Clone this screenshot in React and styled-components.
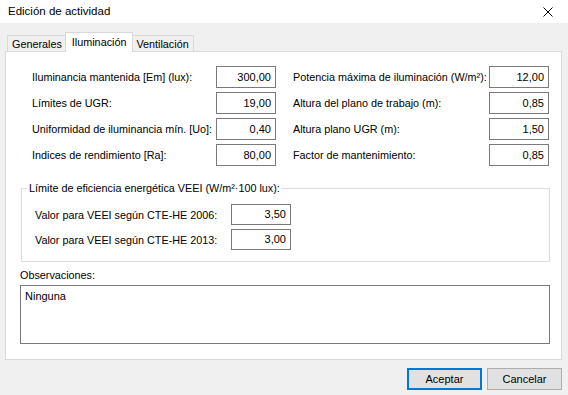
import React from 'react';
import styled, { createGlobalStyle } from 'styled-components';

const Global = createGlobalStyle`
  html, body { margin: 0; padding: 0; background: #f0f0f0; }
  body { font-family: "Liberation Sans", Arial, sans-serif; font-size: 10.8px; color: #000; }
  #root { width: 568px; height: 395px; overflow: hidden; }
  * { box-sizing: border-box; }
`;

const Window = styled.div`
  width: 568px;
  height: 395px;
  display: flex;
  flex-direction: column;
  background: #f0f0f0;
`;

const TitleBar = styled.div`
  height: 23px;
  background: #fff;
  display: flex;
  align-items: center;
  justify-content: space-between;
  padding: 0 15px 0 8px;
`;

const Title = styled.span`
  font-size: 11.5px;
  line-height: 14px;
  margin-top: -2px;
`;

const Body = styled.div`
  padding: 9px 6px 0 5px;
  display: flex;
  flex-direction: column;
`;

const TabStrip = styled.div`
  display: flex;
  align-items: flex-end;
  height: 19px;
  padding-left: 2px;
`;

const Tab = styled.div`
  position: relative;
  height: ${p => (p.$active ? '20px' : '16px')};
  margin: ${p => (p.$active ? '0 -2px -1px' : '0')};
  z-index: ${p => (p.$active ? 1 : 0)};
  padding: ${p => (p.$active ? '0 6px 1px' : '0 4px')};
  background: ${p => (p.$active ? '#fff' : '#f0f0f0')};
  border: 1px solid #d9d9d9;
  border-bottom: none;
  display: flex;
  align-items: center;
  line-height: 14px;
  white-space: nowrap;
`;

const Panel = styled.div`
  width: 557px;
  background: #fff;
  border: 1px solid #d9d9d9;
  padding: 14px 13px 15px 14px;
  display: flex;
  flex-direction: column;
`;

const FieldGrid = styled.div`
  display: grid;
  grid-template-columns: 244px 256px;
  column-gap: 17px;
  row-gap: 4px;
  margin-left: 12px;
`;

const Field = styled.div`
  display: flex;
  align-items: center;
  justify-content: space-between;
  height: 22px;
`;

const Label = styled.span`
  line-height: 14px;
  white-space: nowrap;
`;

const NumBox = styled.input`
  width: 60px;
  height: ${p => p.$h || 22}px;
  border: 1px solid #7a7a7a;
  background: #fff;
  text-align: right;
  padding: 0 4px 1px 2px;
  font-family: inherit;
  font-size: 11px;
  color: #000;
  outline: none;
`;

const Group = styled.fieldset`
  margin: 15px 0 0 1px;
  width: 529px;
  border: 1px solid #dcdcdc;
  padding: 8px 10px 11px 5px;
  min-width: 0;
`;

const Legend = styled.legend`
  padding: 0 2px;
  line-height: 15px;
`;

const GroupGrid = styled.div`
  display: grid;
  grid-template-columns: 196px 60px;
  row-gap: 4px;
  margin-left: 8px;
`;

const GroupField = styled.div`
  display: contents;
`;

const GroupLabel = styled.span`
  display: flex;
  align-items: center;
  height: 21px;
  line-height: 14px;
  white-space: nowrap;
`;

const ObsLabel = styled.div`
  margin-top: 6px;
  line-height: 15px;
`;

const TextArea = styled.textarea`
  margin-top: 2px;
  width: 530px;
  height: 59px;
  border: 1px solid #7a7a7a;
  padding: 3px 4px;
  font-family: inherit;
  font-size: 11px;
  line-height: 14px;
  resize: none;
  outline: none;
  color: #000;
  display: block;
`;

const ButtonRow = styled.div`
  display: flex;
  justify-content: flex-end;
  gap: 5px;
  margin-top: 8px;
`;

const Button = styled.button`
  width: 75px;
  height: 22px;
  background: #e1e1e1;
  border: ${p => (p.$primary ? '2px solid #0078d7' : '1px solid #adadad')};
  font-family: inherit;
  font-size: 11px;
  color: #000;
  padding: 0;
  line-height: 14px;
`;

const CloseIcon = () => (
  <svg width="10" height="10" viewBox="0 0 10 10">
    <path d="M0.5 0.5 L9.5 9.5 M9.5 0.5 L0.5 9.5" stroke="#000" strokeWidth="1" fill="none" />
  </svg>
);

const leftFields = [
  ['Iluminancia mantenida [Em] (lux):', '300,00'],
  ['Límites de UGR:', '19,00'],
  ['Uniformidad de iluminancia mín. [Uo]:', '0,40'],
  ['Indices de rendimiento [Ra]:', '80,00'],
];

const rightFields = [
  ['Potencia máxima de iluminación (W/m²):', '12,00'],
  ['Altura del plano de trabajo (m):', '0,85'],
  ['Altura plano UGR (m):', '1,50'],
  ['Factor de mantenimiento:', '0,85'],
];

export default function App() {
  const rows = [];
  for (let i = 0; i < 4; i++) {
    rows.push(
      <Field key={'l' + i}>
        <Label>{leftFields[i][0]}</Label>
        <NumBox readOnly value={leftFields[i][1]} />
      </Field>,
      <Field key={'r' + i}>
        <Label>{rightFields[i][0]}</Label>
        <NumBox readOnly value={rightFields[i][1]} />
      </Field>
    );
  }
  return (
    <>
      <Global />
      <Window>
        <TitleBar>
          <Title>Edición de actividad</Title>
          <CloseIcon />
        </TitleBar>
        <Body>
          <TabStrip>
            <Tab>Generales</Tab>
            <Tab $active>Iluminación</Tab>
            <Tab>Ventilación</Tab>
          </TabStrip>
          <Panel>
            <FieldGrid>{rows}</FieldGrid>
            <Group>
              <Legend>Límite de eficiencia energética VEEI (W/m²·100 lux):</Legend>
              <GroupGrid>
                <GroupField>
                  <GroupLabel>Valor para VEEI según CTE-HE 2006:</GroupLabel>
                  <NumBox readOnly value="3,50" $h={21} />
                </GroupField>
                <GroupField>
                  <GroupLabel>Valor para VEEI según CTE-HE 2013:</GroupLabel>
                  <NumBox readOnly value="3,00" $h={21} />
                </GroupField>
              </GroupGrid>
            </Group>
            <ObsLabel>Observaciones:</ObsLabel>
            <TextArea readOnly value="Ninguna" />
          </Panel>
          <ButtonRow>
            <Button $primary>Aceptar</Button>
            <Button>Cancelar</Button>
          </ButtonRow>
        </Body>
      </Window>
    </>
  );
}
